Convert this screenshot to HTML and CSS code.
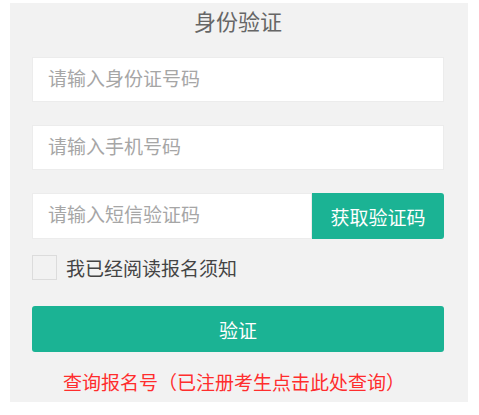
FILE: index.html
```html
<!DOCTYPE html>
<html lang="zh-CN">
<head>
    <meta charset="UTF-8">
    <meta name="viewport" content="width=device-width, initial-scale=1.0">
    <title>身份验证</title>
    <link rel="stylesheet" href="styles.css">
</head>
<body>
    <section class="panel">
        <h2 class="panel-title">身份验证</h2>
        <form class="verify-form">
            <input class="field" type="text" placeholder="请输入身份证号码">
            <input class="field" type="text" placeholder="请输入手机号码">
            <div class="code-row">
                <input class="field code-field" type="text" placeholder="请输入短信验证码">
                <button class="code-btn" type="button">获取验证码</button>
            </div>
            <label class="agree">
                <span class="agree-box"></span>
                <span class="agree-text">我已经阅读报名须知</span>
            </label>
            <button class="submit-btn" type="button">验证</button>
        </form>
        <a class="query-link" href="#">查询报名号（已注册考生点击此处查询）</a>
    </section>
</body>
</html>
```

FILE: styles.css
```css
html {
    box-sizing: border-box;
    font-family: "Liberation Sans", "Noto Sans CJK SC", sans-serif;
}

*,
*:before,
*:after {
    box-sizing: inherit;
}

body {
    margin: 0;
    padding-top: 3px;
    background-color: white;
}

.panel {
    margin-left: 10px;
    width: 458px;
    height: 399px;
    padding: 0 24px 0 22px;
    background-color: #f2f2f2;
}

.panel-title {
    margin: 0;
    height: 40px;
    line-height: 40px;
    text-align: center;
    font-size: 22px;
    font-weight: normal;
    color: #666;
}

.verify-form {
    margin-top: 14px;
    display: flex;
    flex-direction: column;
}

.field {
    display: block;
    width: 100%;
    height: 45px;
    margin: 0 0 23px;
    padding: 0 15px;
    border: 1px solid #ececec;
    background-color: white;
    font-family: inherit;
    font-size: 19px;
    color: #333;
    outline: none;
}

.field::placeholder {
    color: #a6a6a6;
}

.code-row {
    display: flex;
    height: 46px;
}

.code-field {
    flex: 1;
    height: 46px;
    margin: 0;
}

.code-btn {
    width: 132px;
    border: none;
    border-radius: 0 3px 3px 0;
    background-color: #1bb394;
    color: white;
    font-family: inherit;
    font-size: 19px;
}

.agree {
    display: flex;
    align-items: center;
    gap: 9px;
    margin-top: 16px;
    height: 25px;
}

.agree-box {
    width: 25px;
    height: 25px;
    border: 1px solid #dcdcdc;
    background-color: #f2f2f2;
}

.agree-text {
    font-size: 19px;
    color: #444;
}

.submit-btn {
    margin-top: 26px;
    height: 46px;
    border: none;
    border-radius: 3px;
    background-color: #1bb394;
    color: white;
    font-family: inherit;
    font-size: 19px;
}

.query-link {
    display: block;
    margin-top: 20px;
    padding-right: 8px;
    line-height: 24px;
    text-align: center;
    font-size: 19px;
    color: #ff2d2d;
    text-decoration: none;
}
```
